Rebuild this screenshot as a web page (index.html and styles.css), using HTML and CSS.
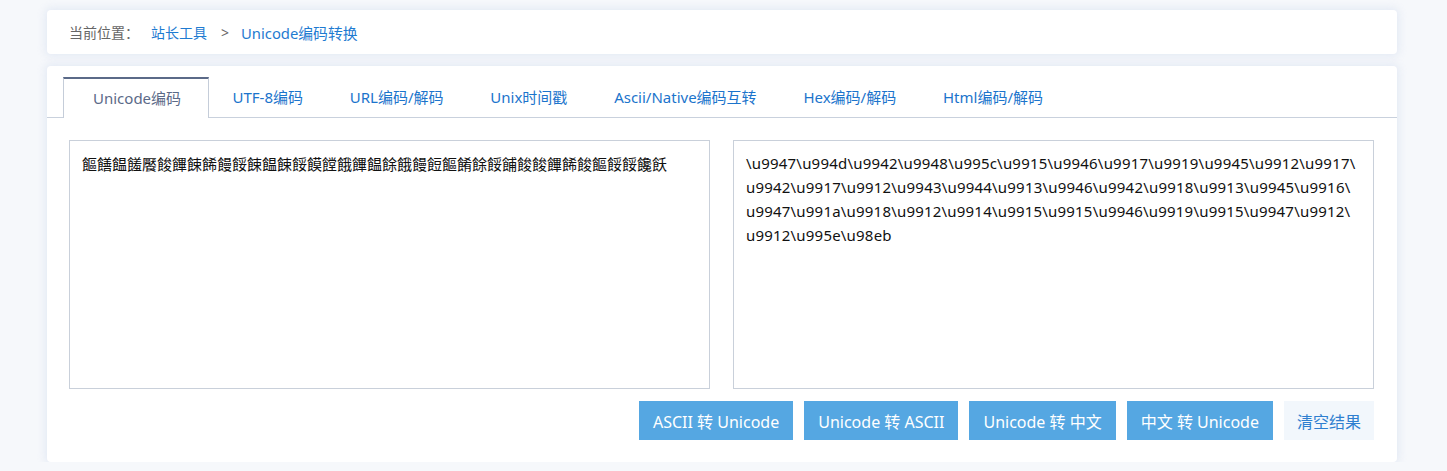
FILE: index.html
```html
<!DOCTYPE html>
<html lang="zh-CN">
<head>
<meta charset="utf-8">
<title>Unicode编码转换</title>
<link rel="stylesheet" href="styles.css">
</head>
<body>
<div class="page">
  <div class="card crumbs">
    <span class="crumb-label">当前位置：</span>
    <a class="crumb-link" href="#">站长工具</a>
    <span class="crumb-sep">&gt;</span>
    <a class="crumb-link crumb-current" href="#">Unicode编码转换</a>
  </div>
  <div class="card main">
    <div class="tabs">
      <a class="tab active" href="#">Unicode编码</a>
      <a class="tab" href="#">UTF-8编码</a>
      <a class="tab" href="#">URL编码/解码</a>
      <a class="tab" href="#">Unix时间戳</a>
      <a class="tab" href="#">Ascii/Native编码互转</a>
      <a class="tab" href="#">Hex编码/解码</a>
      <a class="tab" href="#">Html编码/解码</a>
    </div>
    <div class="panes">
      <textarea class="box box-src">&#x9947;&#x994d;&#x9942;&#x9948;&#x995c;&#x9915;&#x9946;&#x9917;&#x9919;&#x9945;&#x9912;&#x9917;&#x9942;&#x9917;&#x9912;&#x9943;&#x9944;&#x9913;&#x9946;&#x9942;&#x9918;&#x9913;&#x9945;&#x9916;&#x9947;&#x991a;&#x9918;&#x9912;&#x9914;&#x9915;&#x9915;&#x9946;&#x9919;&#x9915;&#x9947;&#x9912;&#x9912;&#x995e;&#x98eb;</textarea>
      <textarea class="box box-out">\u9947\u994d\u9942\u9948\u995c\u9915\u9946\u9917\u9919\u9945\u9912\u9917\
u9942\u9917\u9912\u9943\u9944\u9913\u9946\u9942\u9918\u9913\u9945\u9916\
u9947\u991a\u9918\u9912\u9914\u9915\u9915\u9946\u9919\u9915\u9947\u9912\
u9912\u995e\u98eb</textarea>
    </div>
    <div class="actions">
      <button class="btn" type="button">ASCII 转 Unicode</button>
      <button class="btn" type="button">Unicode 转 ASCII</button>
      <button class="btn" type="button">Unicode 转 中文</button>
      <button class="btn" type="button">中文 转 Unicode</button>
      <button class="btn btn-light" type="button">清空结果</button>
    </div>
  </div>
</div>
</body>
</html>
```

FILE: styles.css
```css
* { box-sizing: border-box; }
html, body { margin: 0; padding: 0; }
body {
  background: #f6f8fb;
  font-family: "Noto Sans", "Noto Sans CJK SC", sans-serif;
  color: #333;
}
.page {
  width: 1350px;
  margin-left: 47px;
  padding-top: 10px;
  display: flex;
  flex-direction: column;
  gap: 12px;
}
.card {
  background: #fff;
  border-radius: 4px;
  box-shadow: 0 0 8px 2px rgba(214, 224, 240, 0.6);
}
.crumbs {
  height: 44px;
  display: flex;
  align-items: center;
  padding-left: 22px;
  font-size: 14px;
}
.crumb-label { color: #666; margin-right: 12px; }
.crumb-link { color: #1f7bd1; text-decoration: none; }
.crumb-sep { color: #666; margin: 0 12px 0 14px; }
.crumb-current { font-size: 14.8px; }

.main { padding: 11px 0 22px; }
.tabs {
  display: flex;
  padding-left: 16px;
  border-bottom: 1px solid #c9d1dd;
  height: 41px;
}
.tab {
  display: block;
  height: 40px;
  line-height: 40px;
  padding: 0 23.4px;
  font-size: 15px;
  color: #1b74cc;
  text-decoration: none;
  white-space: nowrap;
}
.tab.active {
  height: 41px;
  padding: 0 27px 0 29px;
  color: #5b6a88;
  background: #fff;
  border: 1px solid #c5cdd9;
  border-top: 2px solid #5b6a88;
  border-bottom: 0;
  line-height: 38px;
}
.panes {
  display: flex;
  gap: 23px;
  padding: 22px 23px 0 22px;
}
.box {
  flex: none;
  width: 641px;
  height: 249px;
  border: 1px solid #c9d0da;
  padding: 12px 12px;
  line-height: 24px;
  color: #111;
  resize: none;
  outline: none;
  background: #fff;
  margin: 0;
}
.box-src {
  font-family: "Noto Sans CJK TC", "Noto Sans CJK SC", sans-serif;
  font-size: 15px;
  padding-top: 11px;
}
.box-out {
  font-family: "Noto Sans", "Liberation Sans", sans-serif;
  font-size: 15px;
  letter-spacing: 0.2px;
  padding-top: 10px;
  padding-right: 6px;
}
.actions {
  display: flex;
  justify-content: flex-end;
  gap: 11px;
  padding: 12px 23px 0;
}
.btn {
  height: 39px;
  padding: 0 14px;
  border: 0;
  background: #55a7e2;
  color: #fff;
  font-family: "Noto Sans", "Noto Sans CJK SC", sans-serif;
  font-size: 16px;
  cursor: pointer;
}
.btn-light {
  background: #f2f7fc;
  color: #2f7fd0;
  padding: 0 13px;
}
```
